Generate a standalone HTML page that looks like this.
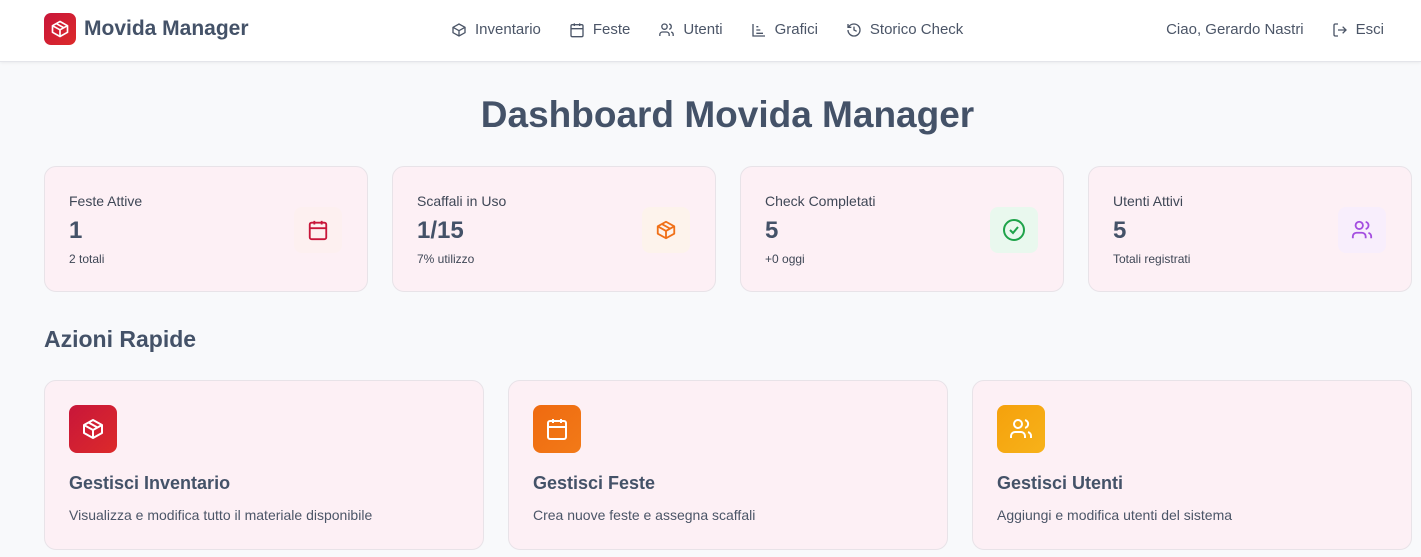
<!DOCTYPE html>
<html><head><meta charset="utf-8"><style>
*{box-sizing:border-box;margin:0;padding:0}
body{width:1421px;height:557px;overflow:hidden;background:#f8f9fb;font-family:"Liberation Sans",sans-serif;color:#445268}
.nav{height:62px;background:#fff;border-bottom:1px solid #e4e5ea;box-shadow:0 1px 3px rgba(0,0,0,.06);position:relative}
.logo{position:absolute;left:44px;top:13px;width:32px;height:32px;border-radius:7px;background:linear-gradient(135deg,#c8163a,#dc2a2a);display:flex;align-items:center;justify-content:center}
.brand{position:absolute;left:84px;top:17px;font-size:21px;font-weight:bold;color:#445268}
.links{position:absolute;left:451px;top:21px;display:flex;font-size:15px;color:#4b5567}
.links span{display:flex;align-items:center;gap:8px;margin-right:28px}
.right{position:absolute;right:37px;top:21px;font-size:15px;color:#4b5567;display:flex;gap:28px}
.right span{display:flex;align-items:center;gap:8px}
h1{position:absolute;top:94px;left:0;width:1455px;text-align:center;font-size:37px;color:#445268}
.stat{position:absolute;top:166px;width:324px;height:126px;background:#fdf0f5;border:1px solid #e8e3e8;border-radius:12px}
.stat .l{position:absolute;left:24px;top:26px;font-size:14px;color:#3f4756}
.stat .v{position:absolute;left:24px;top:50px;font-size:24px;font-weight:bold;color:#445268}
.stat .s{position:absolute;left:24px;top:85px;font-size:12px;color:#3f4756}
.stat .ic{position:absolute;left:249px;top:40px;width:48px;height:46px;border-radius:8px;display:flex;align-items:center;justify-content:center}
h2{position:absolute;left:44px;top:326px;font-size:23px;color:#445268}
.act{position:absolute;top:380px;width:440px;height:170px;background:#fdf0f5;border:1px solid #e8e3e8;border-radius:12px}
.act .ic{position:absolute;left:24px;top:24px;width:48px;height:48px;border-radius:8px;display:flex;align-items:center;justify-content:center}
.act .t{position:absolute;left:24px;top:92px;font-size:18px;font-weight:bold;color:#445268}
.act .d{position:absolute;left:24px;top:126px;font-size:14px;color:#4b5567}
</style></head><body>
<div class="nav">
<div class="logo"><svg width="20" height="20" viewBox="0 0 24 24" fill="none" stroke="#fff" stroke-width="2" stroke-linejoin="round"><path d="M21 8l-9-5-9 5v8l9 5 9-5z"/><path d="M3 8l9 5 9-5M12 13v8M7.5 5.5l9 5"/></svg></div>
<div class="brand">Movida Manager</div>
<div class="links">
<span><svg width="16" height="16" viewBox="0 0 24 24" fill="none" stroke="#4b5567" stroke-width="2"><path d="M21 8l-9-5-9 5v8l9 5 9-5z"/><path d="M3 8l9 5 9-5M12 13v8"/></svg>Inventario</span>
<span><svg width="16" height="16" viewBox="0 0 24 24" fill="none" stroke="#4b5567" stroke-width="2"><rect x="3" y="4" width="18" height="18" rx="2"/><path d="M16 2v4M8 2v4M3 10h18"/></svg>Feste</span>
<span><svg width="17" height="16" viewBox="0 0 24 24" fill="none" stroke="#4b5567" stroke-width="2"><circle cx="9" cy="7" r="4"/><path d="M2 21v-2a4 4 0 014-4h6a4 4 0 014 4v2M16 3.1a4 4 0 010 7.8M22 21v-2a4 4 0 00-3-3.9"/></svg>Utenti</span>
<span><svg width="16" height="16" viewBox="0 0 24 24" fill="none" stroke="#4b5567" stroke-width="2"><path d="M3 3v18h18M8 17h10M8 12h6M8 7h3"/></svg>Grafici</span>
<span><svg width="16" height="16" viewBox="0 0 24 24" fill="none" stroke="#4b5567" stroke-width="2"><path d="M3 12a9 9 0 109-9 9.7 9.7 0 00-6.7 2.7L3 8M3 3v5h5M12 7v5l4 2"/></svg>Storico Check</span>
</div>
<div class="right"><span>Ciao, Gerardo Nastri</span><span><svg width="16" height="16" viewBox="0 0 24 24" fill="none" stroke="#4b5567" stroke-width="2"><path d="M9 21H5a2 2 0 01-2-2V5a2 2 0 012-2h4M16 17l5-5-5-5M21 12H9"/></svg>Esci</span></div>
</div>
<h1>Dashboard Movida Manager</h1>
<div class="stat" style="left:44px"><div class="l">Feste Attive</div><div class="v">1</div><div class="s">2 totali</div><div class="ic" style="background:#fdf0f0"><svg width="22" height="22" viewBox="0 0 24 24" fill="none" stroke="#c8163a" stroke-width="2"><rect x="3" y="4" width="18" height="18" rx="2"/><path d="M16 2v4M8 2v4M3 10h18"/></svg></div></div>
<div class="stat" style="left:392px"><div class="l">Scaffali in Uso</div><div class="v">1/15</div><div class="s">7% utilizzo</div><div class="ic" style="background:#fdf3ec"><svg width="22" height="22" viewBox="0 0 24 24" fill="none" stroke="#f07018" stroke-width="2" stroke-linejoin="round"><path d="M21 8l-9-5-9 5v8l9 5 9-5z"/><path d="M3 8l9 5 9-5M12 13v8M7.5 5.5l9 5"/></svg></div></div>
<div class="stat" style="left:740px"><div class="l">Check Completati</div><div class="v">5</div><div class="s">+0 oggi</div><div class="ic" style="background:#e9f8ee"><svg width="24" height="24" viewBox="0 0 24 24" fill="none" stroke="#1fa34a" stroke-width="2"><circle cx="12" cy="12" r="10"/><path d="M8 12l3 3 5-6"/></svg></div></div>
<div class="stat" style="left:1088px"><div class="l">Utenti Attivi</div><div class="v">5</div><div class="s">Totali registrati</div><div class="ic" style="background:#f8eefc"><svg width="24" height="22" viewBox="0 0 24 24" fill="none" stroke="#a44ee0" stroke-width="2"><circle cx="9" cy="7" r="4"/><path d="M2 21v-2a4 4 0 014-4h6a4 4 0 014 4v2M16 3.1a4 4 0 010 7.8M22 21v-2a4 4 0 00-3-3.9"/></svg></div></div>
<h2>Azioni Rapide</h2>
<div class="act" style="left:44px"><div class="ic" style="background:linear-gradient(135deg,#c8163a,#dc2a2a)"><svg width="24" height="24" viewBox="0 0 24 24" fill="none" stroke="#fff" stroke-width="2" stroke-linejoin="round"><path d="M21 8l-9-5-9 5v8l9 5 9-5z"/><path d="M3 8l9 5 9-5M12 13v8M7.5 5.5l9 5"/></svg></div><div class="t">Gestisci Inventario</div><div class="d">Visualizza e modifica tutto il materiale disponibile</div></div>
<div class="act" style="left:508px"><div class="ic" style="background:linear-gradient(135deg,#ef6a10,#f27a18)"><svg width="24" height="24" viewBox="0 0 24 24" fill="none" stroke="#fff" stroke-width="2"><rect x="3" y="4" width="18" height="18" rx="2"/><path d="M16 2v4M8 2v4M3 10h18"/></svg></div><div class="t">Gestisci Feste</div><div class="d">Crea nuove feste e assegna scaffali</div></div>
<div class="act" style="left:972px"><div class="ic" style="background:linear-gradient(135deg,#f5a10c,#f7b21a)"><svg width="24" height="24" viewBox="0 0 24 24" fill="none" stroke="#fff" stroke-width="2"><circle cx="9" cy="7" r="4"/><path d="M2 21v-2a4 4 0 014-4h6a4 4 0 014 4v2M16 3.1a4 4 0 010 7.8M22 21v-2a4 4 0 00-3-3.9"/></svg></div><div class="t">Gestisci Utenti</div><div class="d">Aggiungi e modifica utenti del sistema</div></div>
</body></html>
